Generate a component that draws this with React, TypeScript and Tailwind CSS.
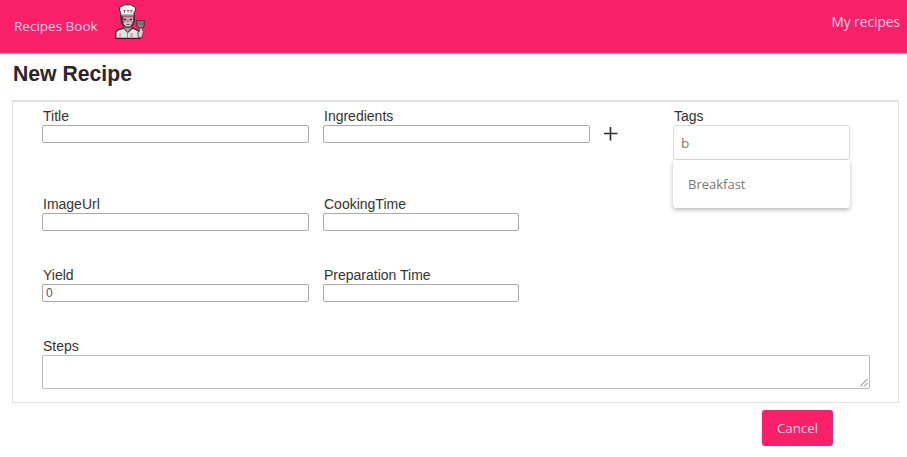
import type { ReactNode } from "react";

function ChefLogo() {
  return (
    <svg width="30" height="36" viewBox="0 0 30 36" className="block">
      <path d="M.8 34.300V28.500l2-2.500 6-1.800 4 4 4.500-4 3.700 1.300 3 2 1 6.800Z" fill="#e4e1e2" stroke="#2b2226" strokeWidth="1.200" />
      <path d="m8.500 23.800 4 5 4.500-5-1-3.300h-6Z" fill="#9d9699" stroke="#4a4044" strokeWidth=".8" />
      <path d="M5.700 11.500h13.600v5l-1.300 4-3 2.700h-4.500L7 20Z" fill="#d3c2c8" stroke="#3c3136" strokeWidth="1.200" />
      <path d="M5.500 12 5.800 19l3 4 1.700.3-2-4V13Z" fill="#43383d" />
      <path d="M18.800 13v5l-2 3.500" fill="none" stroke="#43383d" strokeWidth="1.600" />
      <path d="M8.500 13.500h9" stroke="#fb6d98" strokeWidth="1.200" />
      <path d="M9 15.500h2.500m3 0h2.500" stroke="#33292d" strokeWidth="1.300" />
      <path d="M8.800 17.500h2m4.500 0h2" stroke="#f95c8d" strokeWidth="1.500" />
      <path d="M13 15.500v3m-1.700 2h3.400" stroke="#5d5056" strokeWidth=".9" />
      <path d="M6 12 5.700 8.500 4.500 6.500 4.700 3.300 7.200 2l2.300-1.200h6L18 2l2.300 1.300v3.500L19 8.500V12Z" fill="#fafafa" stroke="#33292d" strokeWidth="1" />
      <path d="M8 6.700h3m1-.2h2.500m1 .2H18M9.500 6v3m3.500-3v2.500M16 6v3" stroke="#706169" strokeWidth=".9" />
      <path d="M6.500 10.500h12" stroke="#aaa1a5" strokeWidth=".8" />
      <path d="M5 29v5M12.500 28.500V34m2.500-4h3m-3 2h3" stroke="#918489" strokeWidth=".9" />
      <path d="M21.800 16.800h7.500v4.700l-2 2.500h-3.300l-2.200-2.500Z" fill="#8d8388" stroke="#40353a" strokeWidth="1.100" />
      <path d="M24 18.500v2.500m1.800-2.500v2.500m1.800-2.500v2.500" stroke="#554a4f" strokeWidth=".7" />
      <path d="M24.500 24h2.500l1.300 3.500L27.300 33l-3.800 1-.8-5.500 1.800-1.300Z" fill="#d5cfd2" stroke="#54474d" strokeWidth=".9" />
    </svg>
  );
}

function Field({ label, width, value = "", children }: { label: string; width: string; value?: string; children?: ReactNode }) {
  return (
    <label className="flex flex-col items-start">
      <span className="h-[17px] pl-px text-sm leading-4">{label}</span>
      {children ?? (
        <input
          defaultValue={value}
          className={`${width} h-[18px] rounded-xs border border-[#aaa] bg-white px-[3px] text-[12px] leading-4 text-[#555] outline-none`}
        />
      )}
    </label>
  );
}

export default function App() {
  return (
    <div className="h-[457px] w-[907px] overflow-hidden bg-white font-['Liberation_Sans',Arial,sans-serif] text-[#333]">
      <header className="flex h-[54px] items-start justify-between border-b border-[#fb7ba4] bg-[#f91f68] pr-[7px] pl-[14px] font-['Open_Sans','Noto_Sans',sans-serif] text-[13.5px] leading-5 text-[#ffd2e1]">
        <div className="flex items-start">
          <a className="mt-4 w-[101px] whitespace-nowrap">Recipes Book</a>
          <div className="mt-1"><ChefLogo /></div>
        </div>
        <a className="mt-3 text-[13.7px] whitespace-nowrap">My recipes</a>
      </header>

      <h1 className="mt-2 ml-[13px] h-[38px] text-[21.2px] leading-6 font-bold text-[#30242a]">New Recipe</h1>

      <form className="ml-3 h-[303px] w-[887px] border border-t-2 border-[#e2e2e2] pt-1.5 pl-[29px]">
        <div className="grid grid-cols-[281px_350px_177px] grid-rows-[88px_71px_71px]">
          <Field label="Title" width="w-[267px]" />
          <div className="flex items-start">
            <Field label="Ingredients" width="w-[267px]" />
            <svg width="14" height="14" viewBox="0 0 14 14" className="mt-[19px] ml-[14px]" stroke="#33272d" strokeWidth="1.600">
              <path d="M0 6.500h13.500M6.500 0v13.500" />
            </svg>
          </div>
          <div className="relative">
            <Field label="Tags" width="w-[177px]">
              <input defaultValue="b" className="h-[35px] w-[177px] rounded-[3px] border border-[#ddd] pl-[7px] font-['Open_Sans','Noto_Sans',sans-serif] text-[13.5px] text-[#777] outline-none" />
            </Field>
            <div className="absolute top-[52px] left-0 flex h-12 w-[177px] items-center rounded-b-[3px] bg-white pt-0.5 pl-[15px] font-['Open_Sans','Noto_Sans',sans-serif] text-[13px] text-[#777] shadow-[0_2px_4px_rgba(0,0,0,0.28)]">
              Breakfast
            </div>
          </div>
          <Field label="ImageUrl" width="w-[267px]" />
          <Field label="CookingTime" width="w-[196px]" />
          <span />
          <Field label="Yield" width="w-[267px]" value="0" />
          <Field label="Preparation Time" width="w-[196px]" />
        </div>
        <Field label="Steps" width="w-[828px]">
          <div className="flex h-[34px] w-[828px] items-end justify-end rounded-xs border-[1.500px] border-[#bbb] p-px">
            <svg width="8" height="8" viewBox="0 0 8 8" stroke="#777" strokeWidth="1">
              <path d="M0 7.500 7.500 0M4 7.500 7.500 4" />
            </svg>
          </div>
        </Field>
      </form>

      <div className="mt-[7px] flex justify-end pr-[74px]">
        <button className="h-9 w-[71px] rounded-[3px] bg-[#f91f68] pt-px font-['Open_Sans','Noto_Sans',sans-serif] text-[13.3px] text-[#ffd2e1]">Cancel</button>
      </div>
    </div>
  );
}
